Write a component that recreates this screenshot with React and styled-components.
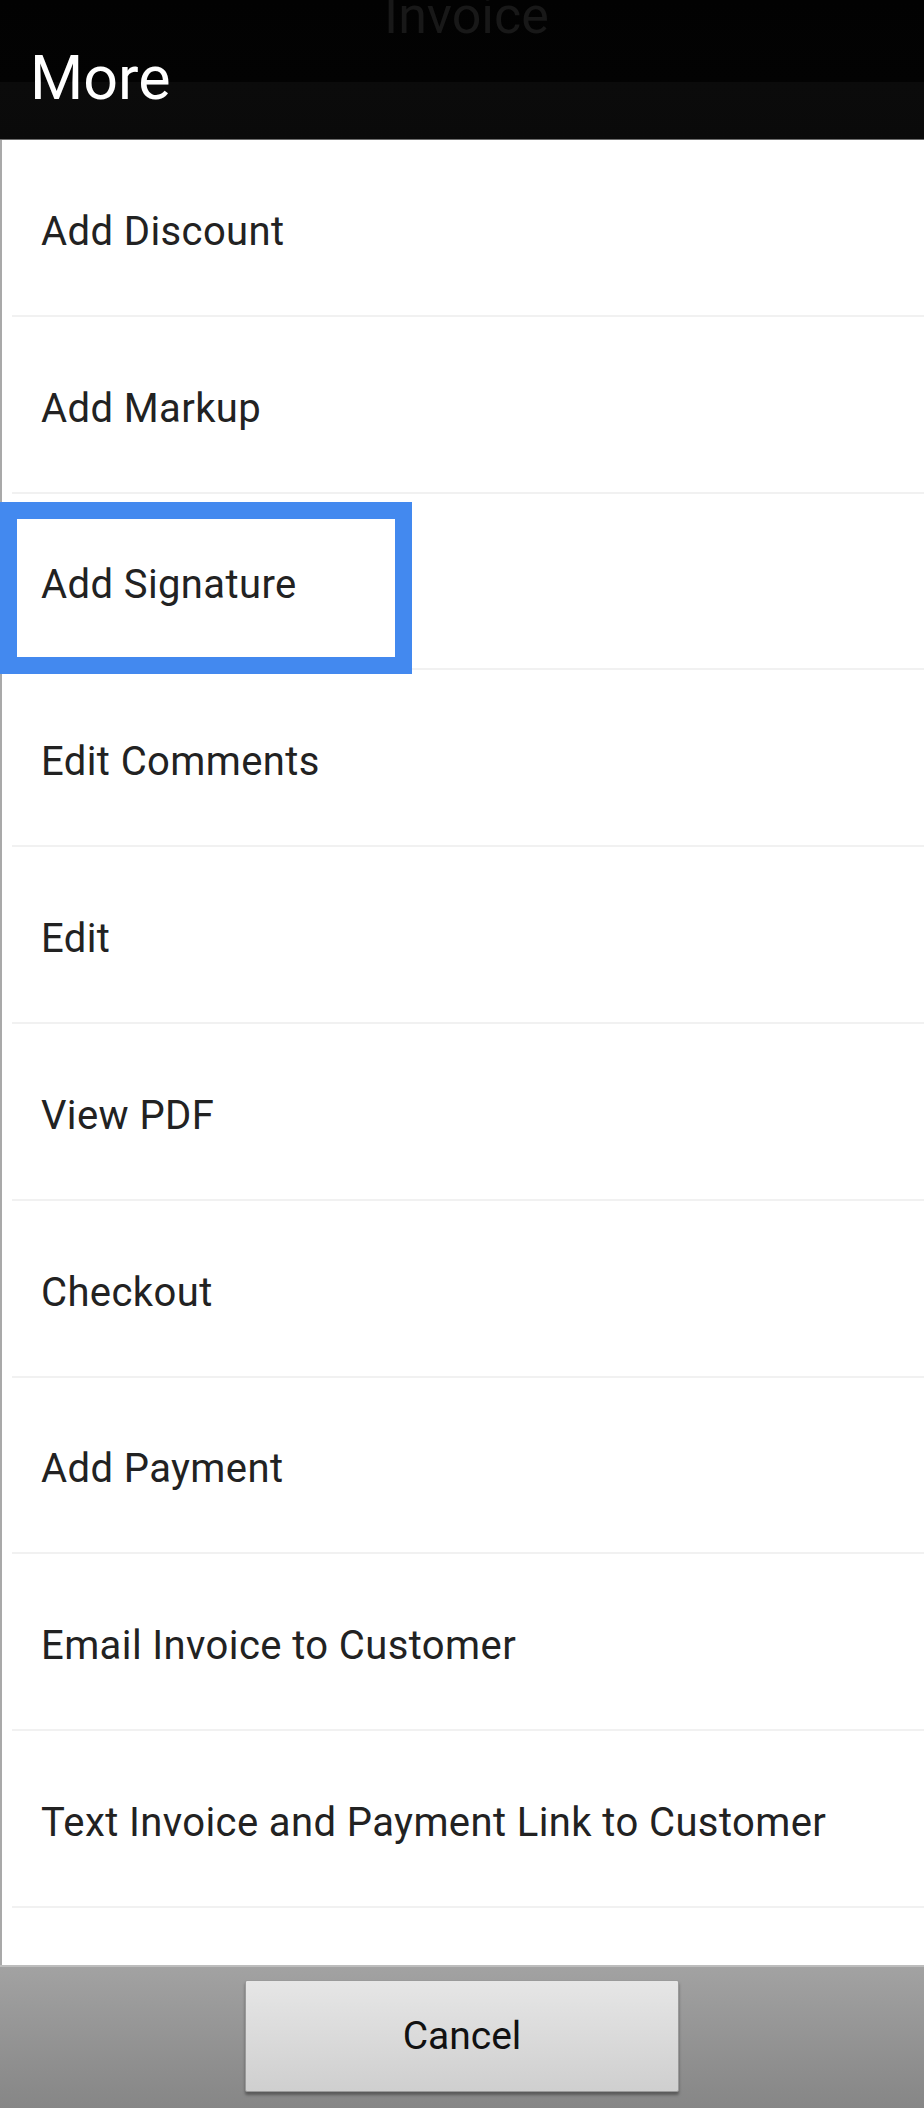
import React from 'react';
import styled, { createGlobalStyle } from 'styled-components';

const items = [
  'Add Discount',
  'Add Markup',
  'Add Signature',
  'Edit Comments',
  'Edit',
  'View PDF',
  'Checkout',
  'Add Payment',
  'Email Invoice to Customer',
  'Text Invoice and Payment Link to Customer',
];

const GlobalStyle = createGlobalStyle`
  html, body {
    margin: 0;
    padding: 0;
    background: #ffffff;
  }
  body {
    font-family: Roboto, 'Noto Sans', sans-serif;
  }
`;

function App() {
  return (
    <>
      <GlobalStyle />
      <Screen>
        <Header>
          <GhostTitle>Invoice</GhostTitle>
          <Title>More</Title>
        </Header>
        <List>
          {items.map((label) => (
            <Row key={label}>
              <RowLabel>{label}</RowLabel>
              {label === 'Add Signature' && <Highlight />}
            </Row>
          ))}
          <Spacer />
        </List>
        <Footer>
          <CancelButton>Cancel</CancelButton>
        </Footer>
      </Screen>
    </>
  );
}

const Screen = styled.div`
  width: 924px;
  height: 2108px;
  display: flex;
  flex-direction: column;
  overflow: hidden;
`;

const Header = styled.div`
  position: relative;
  height: 140px;
  flex-shrink: 0;
  background: linear-gradient(#020202 0, #030303 82px, #0b0b0b 82px, #0a0a0a 138px);
  border-bottom: 1px solid #6b6b6b;
  box-sizing: border-box;
  display: flex;
  align-items: flex-end;
  padding: 0 0 31px 30px;
`;

const GhostTitle = styled.div`
  position: absolute;
  top: -14px;
  left: 384px;
  font-size: 52px;
  line-height: 60px;
  color: #181818;
`;

const Title = styled.div`
  font-size: 61px;
  line-height: 60px;
  color: #ffffff;
`;

const List = styled.div`
  flex: 1;
  display: flex;
  flex-direction: column;
  background: #ffffff;
  border-left: 2px solid #a9a9a9;
`;

const Row = styled.div`
  position: relative;
  height: 176.8px;
  flex-shrink: 0;
  box-sizing: border-box;
  display: flex;
  align-items: center;
  margin-left: 10px;
  padding-left: 29px;
  border-bottom: 2px solid #f1f1f1;
`;

const RowLabel = styled.span`
  font-size: 40px;
  letter-spacing: 0.4px;
  color: #222222;
  padding-top: 8px;
`;

const Highlight = styled.div`
  position: absolute;
  top: 8px;
  left: -12px;
  width: 412px;
  height: 172px;
  box-sizing: border-box;
  border: 17px solid #4389ef;
  pointer-events: none;
`;

const Spacer = styled.div`
  flex: 1;
`;

const Footer = styled.div`
  height: 143px;
  flex-shrink: 0;
  box-sizing: border-box;
  border-top: 2px solid #bdbdbd;
  background: linear-gradient(#a2a2a2, #868686);
  display: flex;
  justify-content: center;
  padding-top: 13px;
`;

const CancelButton = styled.button`
  width: 434px;
  height: 112px;
  border: 1px solid #9a9a9a;
  border-radius: 2px;
  background: linear-gradient(#e6e6e6, #cfcfcf);
  box-shadow: 0 3px 3px rgba(0, 0, 0, 0.35);
  font-family: Roboto, 'Noto Sans', sans-serif;
  font-size: 39px;
  color: #111111;
  padding: 0;
`;

export default App;
